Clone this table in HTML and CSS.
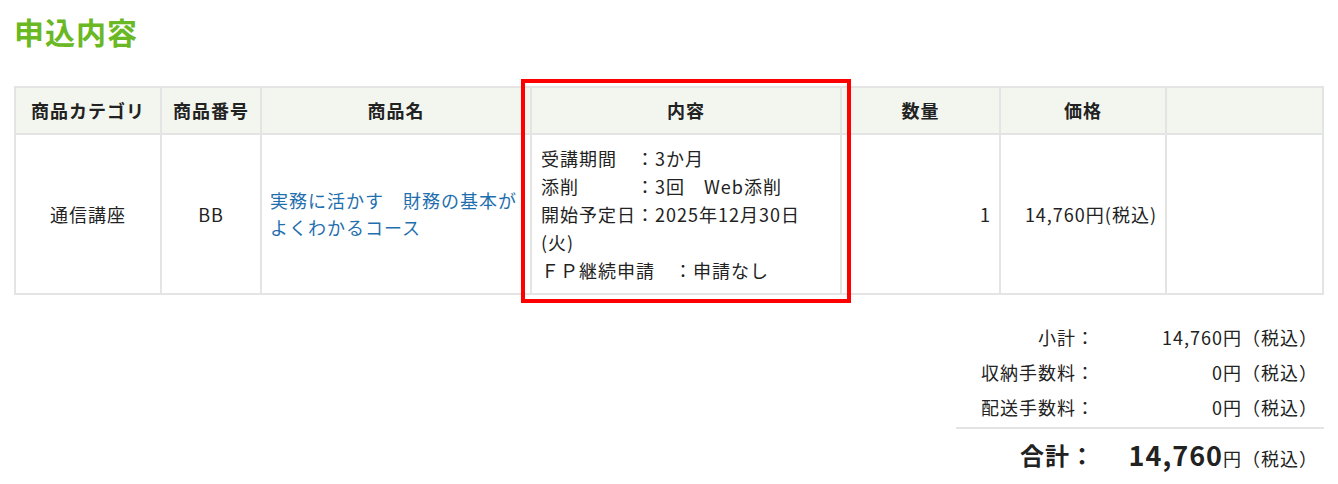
FILE: index.html
```html
<!DOCTYPE html>
<html lang="ja">

<head>
    <meta charset="UTF-8">
    <meta name="viewport" content="width=device-width, initial-scale=1.0">
    <title>申込内容</title>
    <link rel="stylesheet" href="styles.css">
</head>

<body>

    <h1 class="title">申込内容</h1>

    <div class="table-wrap">
        <table class="order-table">
            <colgroup>
                <col style="width: 146px">
                <col style="width: 100px">
                <col style="width: 270px">
                <col style="width: 310px">
                <col style="width: 159px">
                <col style="width: 166px">
                <col>
            </colgroup>
            <thead>
                <tr>
                    <th>商品カテゴリ</th>
                    <th>商品番号</th>
                    <th>商品名</th>
                    <th>内容</th>
                    <th>数量</th>
                    <th>価格</th>
                    <th></th>
                </tr>
            </thead>
            <tbody>
                <tr>
                    <td class="center">通信講座</td>
                    <td class="center">BB</td>
                    <td><a href="#" class="item-link">実務に活かす　財務の基本が<br>よくわかるコース</a></td>
                    <td class="detail">
                        受講期間　：3か月<br>
                        添削　　　：3回　Web添削<br>
                        開始予定日：2025年12月30日<br>(火)<br>
                        ＦＰ継続申請　：申請なし
                    </td>
                    <td class="right">1</td>
                    <td class="right">14,760円(税込)</td>
                    <td></td>
                </tr>
            </tbody>
        </table>
        <div class="highlight"></div>
    </div>

    <div class="summary">
        <div class="sum-row">
            <span class="sum-label">小計：</span>
            <span class="sum-value">14,760円（税込）</span>
        </div>
        <div class="sum-row">
            <span class="sum-label">収納手数料：</span>
            <span class="sum-value">0円（税込）</span>
        </div>
        <div class="sum-row">
            <span class="sum-label">配送手数料：</span>
            <span class="sum-value">0円（税込）</span>
        </div>
        <div class="sum-row total">
            <span class="sum-label">合計：</span>
            <span class="sum-value"><b>14,760</b>円（税込）</span>
        </div>
    </div>

</body>

</html>
```

FILE: styles.css
```css
body {
    margin: 0;
    padding: 0 14px;
    font-family: "Noto Sans CJK JP", "Noto Sans", sans-serif;
    font-size: 18px;
    letter-spacing: 1px;
    color: #222;
    background: #fff;
}

.title {
    margin: 11px 0 35px;
    font-size: 30px;
    line-height: 40px;
    font-weight: bold;
    color: #6ab824;
}

.table-wrap {
    position: relative;
}

.order-table {
    width: 1310px;
    border-collapse: collapse;
    table-layout: fixed;
    border: 2px solid #e4e4e4;
}

.order-table th,
.order-table td {
    border: 2px solid #e4e4e4;
    padding: 0 8px;
    line-height: 27px;
}

.order-table th {
    height: 45px;
    background: #f3f6ef;
    font-weight: bold;
    text-align: center;
}

.order-table td {
    height: 158px;
    vertical-align: middle;
    text-align: left;
}

.order-table td.center {
    text-align: center;
}

.order-table td.right {
    text-align: right;
}

.order-table td.detail {
    padding-left: 9px;
    line-height: 28px;
}

.item-link {
    color: #1f6fae;
    text-decoration: none;
}

.highlight {
    position: absolute;
    left: 507px;
    top: -7px;
    width: 330px;
    height: 224px;
    box-sizing: border-box;
    border: 4px solid #ff0000;
    pointer-events: none;
}

.summary {
    width: 368px;
    margin: 24px 0 0 auto;
}

.sum-row {
    display: flex;
    align-items: center;
    height: 35px;
}

.sum-label {
    width: 139px;
    text-align: right;
}

.sum-value {
    flex: 1;
    text-align: right;
    padding-right: 6px;
}

.total {
    height: 50px;
    border-top: 2px solid #e4e4e4;
    margin-top: 3px;
}

.total .sum-label {
    font-size: 24px;
    font-weight: bold;
}

.total .sum-value b {
    font-size: 27px;
}
```
